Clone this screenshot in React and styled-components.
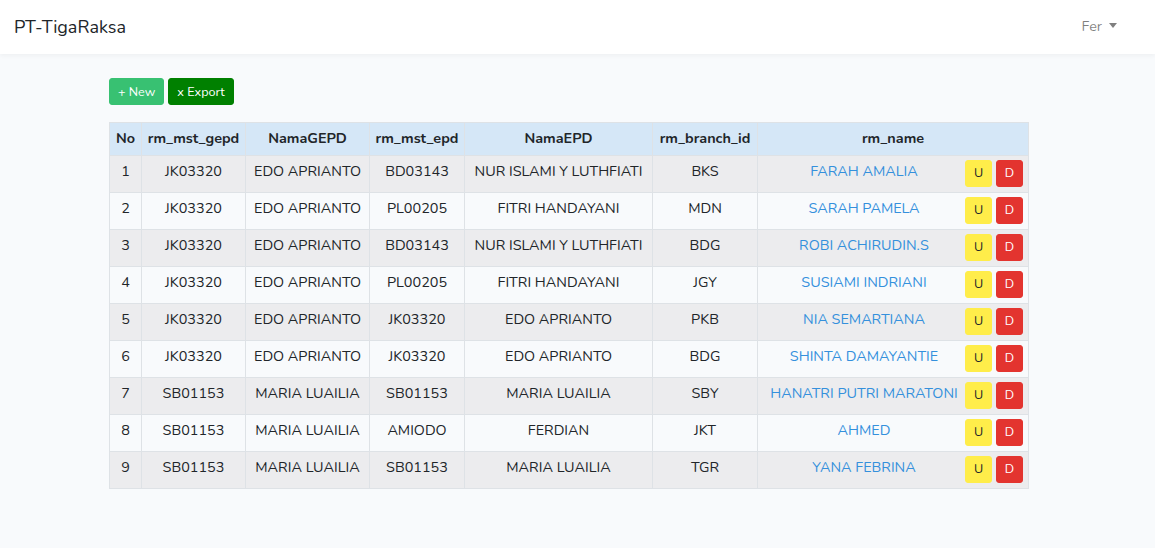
import React from "react";
import styled, { createGlobalStyle } from "styled-components";

const colors = {
  body: "#f8fafc",
  text: "#212529",
  muted: "rgba(0,0,0,0.5)",
  border: "#dee2e6",
  head: "#d5e7f7",
  stripe: "#ececee",
  link: "#3490dc",
  success: "#38c172",
  green: "#008000",
  warning: "#ffed4a",
  danger: "#e3342f",
};

const font = "'Nunito', Lato, 'Open Sans', sans-serif";

const GlobalStyle = createGlobalStyle`
  * { box-sizing: border-box; }
  body {
    margin: 0;
    font-family: ${font};
    font-size: 14.4px;
    line-height: 1.6;
    color: ${colors.text};
    background: ${colors.body};
  }
`;

const Navbar = styled.nav`
  height: 54px;
  background: #fff;
  box-shadow: 0 2px 4px rgba(0, 0, 0, 0.04);
  display: flex;
  align-items: center;
  justify-content: space-between;
  padding: 0 38px 0 14px;
`;

const Brand = styled.div`
  font-size: 18px;
  color: ${colors.text};
`;

const UserMenu = styled.div`
  display: flex;
  align-items: center;
  gap: 7px;
  color: ${colors.muted};
  font-size: 14.4px;
`;

const Caret = styled.span`
  width: 0;
  height: 0;
  border-left: 4.5px solid transparent;
  border-right: 4.5px solid transparent;
  border-top: 5px solid ${colors.muted};
  margin-top: -2px;
`;

const Main = styled.main`
  padding: 24px 0 0 109px;
`;

const Toolbar = styled.div`
  display: flex;
  gap: 4px;
  margin-bottom: 17px;
`;

const ActionButton = styled.button`
  height: 27px;
  width: ${(p) => (p.$square ? "27px" : "auto")};
  padding: ${(p) => (p.$square ? "0" : "1px 8px 0")};
  border: 1px solid ${(p) => p.$bg};
  border-radius: 3px;
  background: ${(p) => p.$bg};
  color: ${(p) => p.$fg || "#fff"};
  font-family: ${font};
  font-size: 12.6px;
  line-height: 1;
  cursor: pointer;
`;

const Table = styled.table`
  width: 920px;
  border-collapse: collapse;
  table-layout: fixed;
`;

const Th = styled.th`
  background: ${colors.head};
  border: 1px solid ${colors.border};
  height: 33px;
  padding: 4px 5px;
  font-weight: 700;
  text-align: center;
  white-space: nowrap;
`;

const Row = styled.tr`
  background: ${(p) => (p.$odd ? colors.stripe : colors.body)};
`;

const Td = styled.td`
  border: 1px solid ${colors.border};
  height: 37px;
  padding: 4px 5px;
  text-align: center;
  vertical-align: top;
  white-space: nowrap;
`;

const NameLink = styled.a`
  color: ${colors.link};
  text-decoration: none;
`;

const Actions = styled.div`
  float: right;
  display: flex;
  gap: 4px;
`;

const widths = [32, 104, 124, 95, 188, 105, 271];
const headers = ["No", "rm_mst_gepd", "NamaGEPD", "rm_mst_epd", "NamaEPD", "rm_branch_id", "rm_name"];

const rows = [
  ["JK03320", "EDO APRIANTO", "BD03143", "NUR ISLAMI Y LUTHFIATI", "BKS", "FARAH AMALIA"],
  ["JK03320", "EDO APRIANTO", "PL00205", "FITRI HANDAYANI", "MDN", "SARAH PAMELA"],
  ["JK03320", "EDO APRIANTO", "BD03143", "NUR ISLAMI Y LUTHFIATI", "BDG", "ROBI ACHIRUDIN.S"],
  ["JK03320", "EDO APRIANTO", "PL00205", "FITRI HANDAYANI", "JGY", "SUSIAMI INDRIANI"],
  ["JK03320", "EDO APRIANTO", "JK03320", "EDO APRIANTO", "PKB", "NIA SEMARTIANA"],
  ["JK03320", "EDO APRIANTO", "JK03320", "EDO APRIANTO", "BDG", "SHINTA DAMAYANTIE"],
  ["SB01153", "MARIA LUAILIA", "SB01153", "MARIA LUAILIA", "SBY", "HANATRI PUTRI MARATONI"],
  ["SB01153", "MARIA LUAILIA", "AMIODO", "FERDIAN", "JKT", "AHMED"],
  ["SB01153", "MARIA LUAILIA", "SB01153", "MARIA LUAILIA", "TGR", "YANA FEBRINA"],
];

export default function App() {
  return (
    <>
      <GlobalStyle />
      <Navbar>
        <Brand>PT-TigaRaksa</Brand>
        <UserMenu>
          Fer <Caret />
        </UserMenu>
      </Navbar>
      <Main>
        <Toolbar>
          <ActionButton $bg={colors.success}>+ New</ActionButton>
          <ActionButton $bg={colors.green}>x Export</ActionButton>
        </Toolbar>
        <Table style={{ width: widths.reduce((a, b) => a + b, 0) }}>
          <colgroup>
            {widths.map((w, i) => (
              <col key={i} style={{ width: w }} />
            ))}
          </colgroup>
          <thead>
            <tr>
              {headers.map((h) => (
                <Th key={h}>{h}</Th>
              ))}
            </tr>
          </thead>
          <tbody>
            {rows.map((r, i) => (
              <Row key={i} $odd={i % 2 === 0}>
                <Td>{i + 1}</Td>
                {r.slice(0, 5).map((c, j) => (
                  <Td key={j}>{c}</Td>
                ))}
                <Td>
                  <Actions>
                    <ActionButton $square $bg={colors.warning} $fg={colors.text}>U</ActionButton>
                    <ActionButton $square $bg={colors.danger}>D</ActionButton>
                  </Actions>
                  <NameLink href="#">{r[5]}</NameLink>
                </Td>
              </Row>
            ))}
          </tbody>
        </Table>
      </Main>
    </>
  );
}
